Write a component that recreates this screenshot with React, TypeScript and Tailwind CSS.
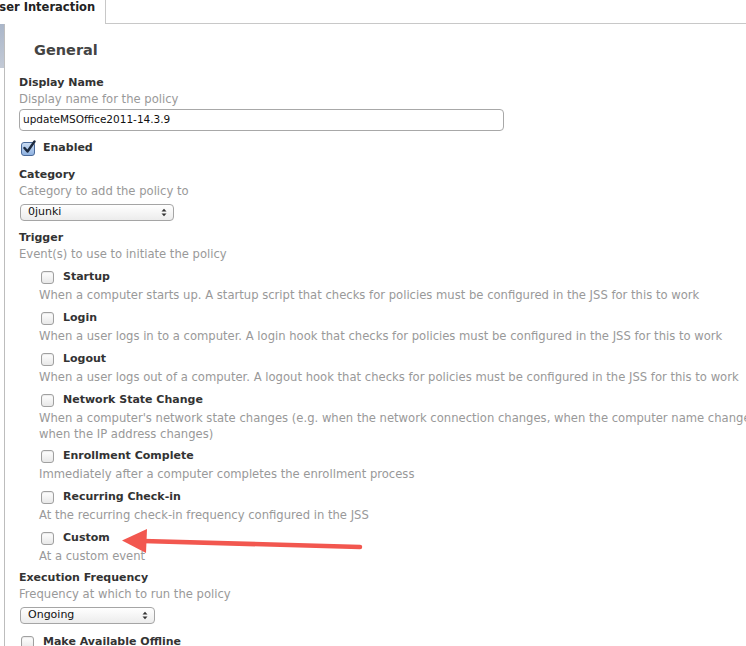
import React from "react";

function Box({ checked = false }: { checked?: boolean }) {
  if (checked) {
    return (
      <span className="relative inline-block w-[14px] h-[14px] rounded-[3px] border border-[#4a6a9a] bg-gradient-to-b from-[#c9dcf3] to-[#8fb2e0] shrink-0">
        <svg className="absolute left-[0px] top-[-3px]" width="15" height="15" viewBox="0 0 15 15">
          <path d="M2.5 8 L5.5 11.5 L12.5 1.5" fill="none" stroke="#1c2a3f" strokeWidth="2.4" strokeLinecap="round" strokeLinejoin="round" />
        </svg>
      </span>
    );
  }
  return (
    <span className="inline-block w-[13px] h-[13px] rounded-[3px] border border-[#a0a0a0] bg-gradient-to-b from-white to-[#e8e8e8] shadow-[inset_0_1px_1px_rgba(0,0,0,0.08)] shrink-0" />
  );
}

function Select({ value, width }: { value: string; width: string }) {
  return (
    <div className={`${width} h-[17px] rounded-[4px] border border-[#a5a5a5] bg-gradient-to-b from-white to-[#ececec] flex items-center justify-between pl-[7px] pr-[6px] text-[11px] text-[#111]`}>
      <span>{value}</span>
      <svg width="6" height="9" viewBox="0 0 6 9">
        <path d="M0.5 3.5 L3 0.8 L5.5 3.5 Z" fill="#333" />
        <path d="M0.5 5.5 L3 8.2 L5.5 5.5 Z" fill="#333" />
      </svg>
    </div>
  );
}

function Label({ children }: { children: React.ReactNode }) {
  return <div className="h-[16px] leading-[16px] text-[11px] font-bold text-[#333]">{children}</div>;
}

function Hint({ children }: { children: React.ReactNode }) {
  return <div className="h-[16px] leading-[16px] text-[11.6px] text-[#999] whitespace-nowrap">{children}</div>;
}

const triggers: { name: string; desc: string[]; gap: string }[] = [
  { name: "Startup", gap: "mt-[7px]", desc: ["When a computer starts up. A startup script that checks for policies must be configured in the JSS for this to work"] },
  { name: "Login", gap: "mt-[7px]", desc: ["When a user logs in to a computer. A login hook that checks for policies must be configured in the JSS for this to work"] },
  { name: "Logout", gap: "mt-[7px]", desc: ["When a user logs out of a computer. A logout hook that checks for policies must be configured in the JSS for this to work"] },
  {
    name: "Network State Change",
    gap: "mt-[7px]",
    desc: [
      "When a computer's network state changes (e.g. when the network connection changes, when the computer name changes, or",
      "when the IP address changes)",
    ],
  },
  { name: "Enrollment Complete", gap: "mt-[6px]", desc: ["Immediately after a computer completes the enrollment process"] },
  { name: "Recurring Check-in", gap: "mt-[7px]", desc: ["At the recurring check-in frequency configured in the JSS"] },
  { name: "Custom", gap: "mt-[7px]", desc: ["At a custom event"] },
];

export default function App() {
  return (
    <div className="relative w-[746px] h-[646px] overflow-hidden bg-white font-['DejaVu_Sans',sans-serif]">
      {/* tab strip */}
      <div className="flex h-[24px]">
        <div className="w-[106px] shrink-0 border-r border-[#c8c8c8] overflow-hidden">
          <div className="ml-[-10px] text-[11.5px] font-bold leading-[15px] text-[#222] whitespace-nowrap">User Interaction</div>
        </div>
        <div className="flex-1 border-b border-[#c8c8c8]" />
      </div>

      <div className="flex">
        <div className="w-[4px] shrink-0">
          <div className="h-[44px] bg-gradient-to-b from-[#aab6c9] to-[#c3cad6]" />
        </div>
        <div className="flex-1 min-w-0 border-l border-[#bdbdbd] pl-[14px] h-[622px]">
          <div className="mt-[15px] ml-[15px] h-[22px] leading-[22px] text-[14.5px] font-bold text-[#444]">General</div>

          <div className="mt-[14px]">
            <Label>Display Name</Label>
            <Hint>Display name for the policy</Hint>
            <div className="mt-[2px] w-[485px] h-[22px] rounded-[4px] border border-[#a8a8a8] pl-[3px] flex items-center text-[10.5px] text-[#111]">
              updateMSOffice2011-14.3.9
            </div>
          </div>

          <div className="mt-[9px] h-[17px] flex items-center gap-[8px] pl-[2px]">
            <Box checked />
            <span className="text-[11px] font-bold text-[#333]">Enabled</span>
          </div>

          <div className="mt-[10px]">
            <Label>Category</Label>
            <Hint>Category to add the policy to</Hint>
            <div className="mt-[5px] ml-[1px]">
              <Select value="0junki" width="w-[154px]" />
            </div>
          </div>

          <div className="mt-[9px]">
            <Label>Trigger</Label>
            <Hint>Event(s) to use to initiate the policy</Hint>
            <div className="pl-[20px]">
              {triggers.map((t) => (
                <div key={t.name} className={t.gap}>
                  <div className="h-[16px] flex items-center gap-[9px] pl-[2px]">
                    <Box />
                    <span className="text-[11px] font-bold text-[#333] leading-[16px]">{t.name}</span>
                  </div>
                  <div className="mt-[2px]">
                    {t.desc.map((d) => (
                      <Hint key={d}>{d}</Hint>
                    ))}
                  </div>
                </div>
              ))}
            </div>
          </div>

          <div className="mt-[6px]">
            <Label>Execution Frequency</Label>
            <Hint>Frequency at which to run the policy</Hint>
            <div className="mt-[5px] ml-[1px]">
              <Select value="Ongoing" width="w-[135px]" />
            </div>
          </div>

          <div className="mt-[10px] h-[16px] flex items-center gap-[9px] pl-[2px]">
            <Box />
            <span className="text-[11px] font-bold text-[#333]">Make Available Offline</span>
          </div>
        </div>
      </div>

      {/* annotation arrow */}
      <svg className="absolute left-0 top-0 pointer-events-none" width="746" height="646">
        <line x1="143" y1="541" x2="360" y2="547" stroke="#f2574f" strokeWidth="4.5" strokeLinecap="round" />
        <path d="M122 540.5 L147 529 L146 553 Z" fill="#f2574f" />
      </svg>
    </div>
  );
}
